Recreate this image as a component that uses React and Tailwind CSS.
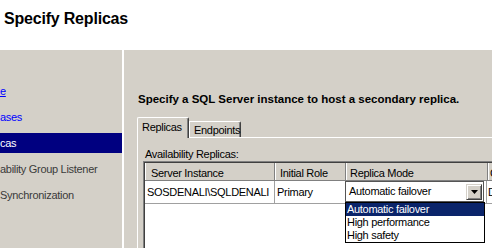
import React from 'react';

// left wizard steps, scrolled so only the tail of each label shows
const navItems = [
  { label: 'e', state: 'link', underline: true },
  { label: 'ases', state: 'link' },
  { label: 'cas', state: 'active' },
  { label: 'ability Group Listener', state: 'off' },
  { label: 'Synchronization', state: 'off' },
];

const modes = ['Automatic failover', 'High performance', 'High safety'];

function NavItem({ item }) {
  if (item.state === 'active') {
    return (
      <div className="h-[26px] flex items-center">
        <div className="h-[20px] w-full bg-[#000080] text-white flex items-center">{item.label}</div>
      </div>
    );
  }
  return (
    <div
      className={`h-[26px] flex items-center whitespace-nowrap ${
        item.state === 'link' ? 'text-[#0000ff]' : 'text-[#3a3a3a]'
      } ${item.underline ? 'underline' : ''}`}
    >
      {item.label}
    </div>
  );
}

function DropButton() {
  return (
    <div className="w-[16px] h-[16px] bg-[#d4d0c8] border border-t-[#d4d0c8] border-l-[#d4d0c8] border-r-[#404040] border-b-[#404040] shadow-[inset_1px_1px_#ffffff,inset_-1px_-1px_#808080] flex items-center justify-center">
      <svg width="7" height="4" viewBox="0 0 7 4">
        <polygon points="0,0 7,0 3.5,4" fill="#000" />
      </svg>
    </div>
  );
}

export default function App() {
  return (
    <div className="w-[492px] h-[248px] overflow-hidden flex flex-col bg-white text-black text-[11px] leading-[13px] tracking-[-0.3px] font-['Liberation_Sans',Arial,sans-serif]">
      {/* page title */}
      <div className="h-[50px] shrink-0 pl-[4px] pt-[9px]">
        <h1 className="text-[16px] leading-[20px] font-bold tracking-[-0.2px]">Specify Replicas</h1>
      </div>

      <div className="flex flex-1 min-h-0 bg-[#d4d0c8]">
        <nav className="w-[122px] shrink-0 pt-[28px] overflow-hidden">
          {navItems.map((item) => (
            <NavItem key={item.label} item={item} />
          ))}
        </nav>
        <div className="w-[2px] shrink-0 bg-white" />

        <div className="flex-1 min-w-0 flex flex-col pt-[43px] pl-[14px] overflow-hidden">
          <p className="font-bold whitespace-nowrap text-[11.5px] tracking-normal">
            Specify a SQL Server instance to host a secondary replica.
          </p>

          {/* tab strip */}
          <div className="mt-[11px] ml-[-1px] h-[20px] flex items-end shrink-0">
            <div className="relative z-10 w-[52px] h-[21px] mb-[-1px] bg-[#d4d0c8] border-l border-t border-r border-l-white border-t-white border-r-[#404040] rounded-tl-[2px] rounded-tr-[2px] shadow-[inset_-1px_0_#808080] pl-[4px] pt-[3px]">
              Replicas
            </div>
            <div className="w-[52px] h-[16px] bg-[#d4d0c8] border-l border-t border-r border-l-white border-t-white border-r-[#404040] rounded-tr-[2px] shadow-[inset_-1px_0_#808080] pl-[4px] pt-[2px]">
              Endpoints
            </div>
          </div>

          {/* tab page */}
          <div className="ml-[-1px] flex-1 min-h-0 flex flex-col border-l border-t border-white pl-[5px] pt-[10px]">
            <div className="pl-[2px] whitespace-nowrap">Availability Replicas:</div>

            <div className="flex-1 min-h-0 border-t border-l border-[#808080]">
              <div className="h-full border-t border-l border-[#404040] bg-white flex flex-col">
                {/* header */}
                <div className="h-[18px] shrink-0 flex bg-[#d4d0c8] border-b border-[#808080] whitespace-nowrap">
                  <div className="w-[130px] shrink-0 border-l border-white border-r border-r-[#808080] pl-[5px] pt-[4px]">Server Instance</div>
                  <div className="w-[71px] shrink-0 border-l border-white border-r border-r-[#808080] pl-[4px] pt-[4px]">Initial Role</div>
                  <div className="w-[142px] shrink-0 border-l border-white border-r border-r-[#808080] pl-[3px] pt-[4px]">Replica Mode</div>
                  <div className="w-[200px] shrink-0 border-l border-white pl-[1px] pt-[4px]">Connection Mode in Secondary Role</div>
                </div>

                {/* data row */}
                <div className="h-[23px] shrink-0 flex items-center border-b border-[#a0a0a0] whitespace-nowrap">
                  <div className="w-[130px] h-full shrink-0 flex items-center border-r border-[#a0a0a0] pl-[2px]">SOSDENALI\SQLDENALI</div>
                  <div className="w-[70px] h-full shrink-0 flex items-center pl-[2px]">Primary</div>
                  <div className="relative w-[139px] h-[21px] shrink-0 self-start bg-white border border-[#555] flex items-center justify-between pl-[3px] pr-px">
                    <span>Automatic failover</span>
                    <DropButton />
                    {/* open list */}
                    <div className="absolute left-[-1px] top-[20px] w-[140px] z-20 bg-white border border-black">
                      {modes.map((m, i) => (
                        <div
                          key={m}
                          className={`h-[13px] pl-[1px] ${i === 0 ? 'bg-[#0a246a] text-white' : ''}`}
                        >
                          {m}
                        </div>
                      ))}
                    </div>
                  </div>
                  <div className="w-[3px] h-full shrink-0 border-r border-[#a0a0a0]" />
                  <div className="h-full shrink-0 flex items-center pl-[1px]">Disallow connections</div>
                </div>
              </div>
            </div>
          </div>
        </div>
      </div>
    </div>
  );
}
